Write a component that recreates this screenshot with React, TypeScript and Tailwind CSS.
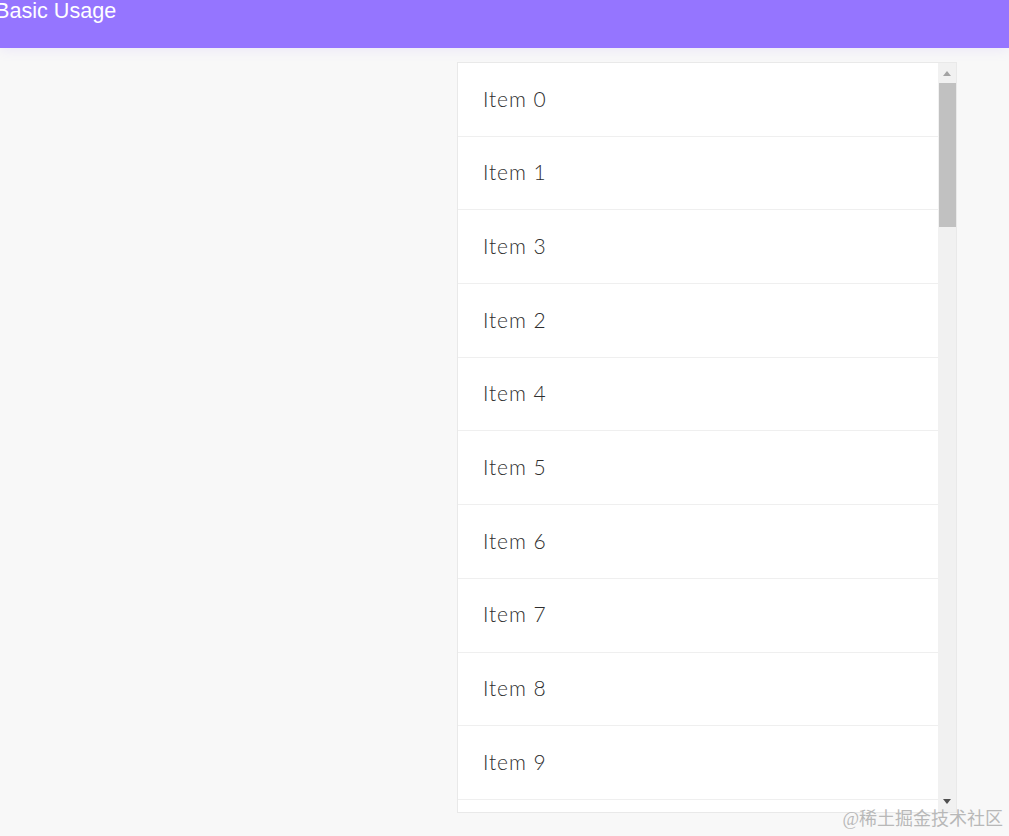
import React from 'react';

const items = [0, 1, 3, 2, 4, 5, 6, 7, 8, 9, 10];

const App: React.FC = () => {
  return (
    <div className="min-h-screen w-full bg-[#f8f8f8] overflow-hidden relative">
      {/* header bar */}
      <div className="h-[48px] bg-[#9575ff] shadow-[0_2px_12px_rgba(149,117,255,0.12)] overflow-hidden">
        <h1
          className="-ml-[5px] -mt-[2px] text-[21.6px] leading-[25px] text-white"
          style={{ fontFamily: '"Liberation Sans", Arial, sans-serif' }}
        >
          Basic Usage
        </h1>
      </div>

      {/* sortable list */}
      <div className="ml-[457px] mt-[14px] w-[500px] h-[751px] flex border border-[#e9e9e9] bg-white">
        <ul className="flex-1 overflow-hidden">
          {items.map((n) => (
            <li
              key={n}
              className="h-[73.7px] flex items-center pl-[25px] pb-[2px] border-b border-[#efefef] text-[21px] font-light text-[#2e2e2e]"
              style={{ fontFamily: 'Lato, "Noto Sans", sans-serif', letterSpacing: '0.9px' }}
            >
              Item {n}
            </li>
          ))}
        </ul>
        {/* scrollbar */}
        <div className="w-[18px] bg-[#f1f1f1] flex flex-col items-center">
          <div className="h-[20px] flex items-center justify-center">
            <svg width="8" height="5" viewBox="0 0 8 5">
              <path d="M0 5 L4 0 L8 5 Z" fill="#a3a3a3" />
            </svg>
          </div>
          <div className="w-[17px] h-[144px] bg-[#c1c1c1]" />
          <div className="flex-1" />
          <div className="h-[22px] flex items-center justify-center">
            <svg width="8" height="5" viewBox="0 0 8 5">
              <path d="M0 0 L4 5 L8 0 Z" fill="#505050" />
            </svg>
          </div>
        </div>
      </div>

      {/* watermark */}
      <div
        className="absolute right-[6px] top-[806px] text-[18px] leading-[26px] text-[#b8b8b8]"
        style={{ fontFamily: '"Liberation Serif", "Noto Sans CJK SC", serif' }}
      >
        @稀土掘金技术社区
      </div>
    </div>
  );
};

export default App;
